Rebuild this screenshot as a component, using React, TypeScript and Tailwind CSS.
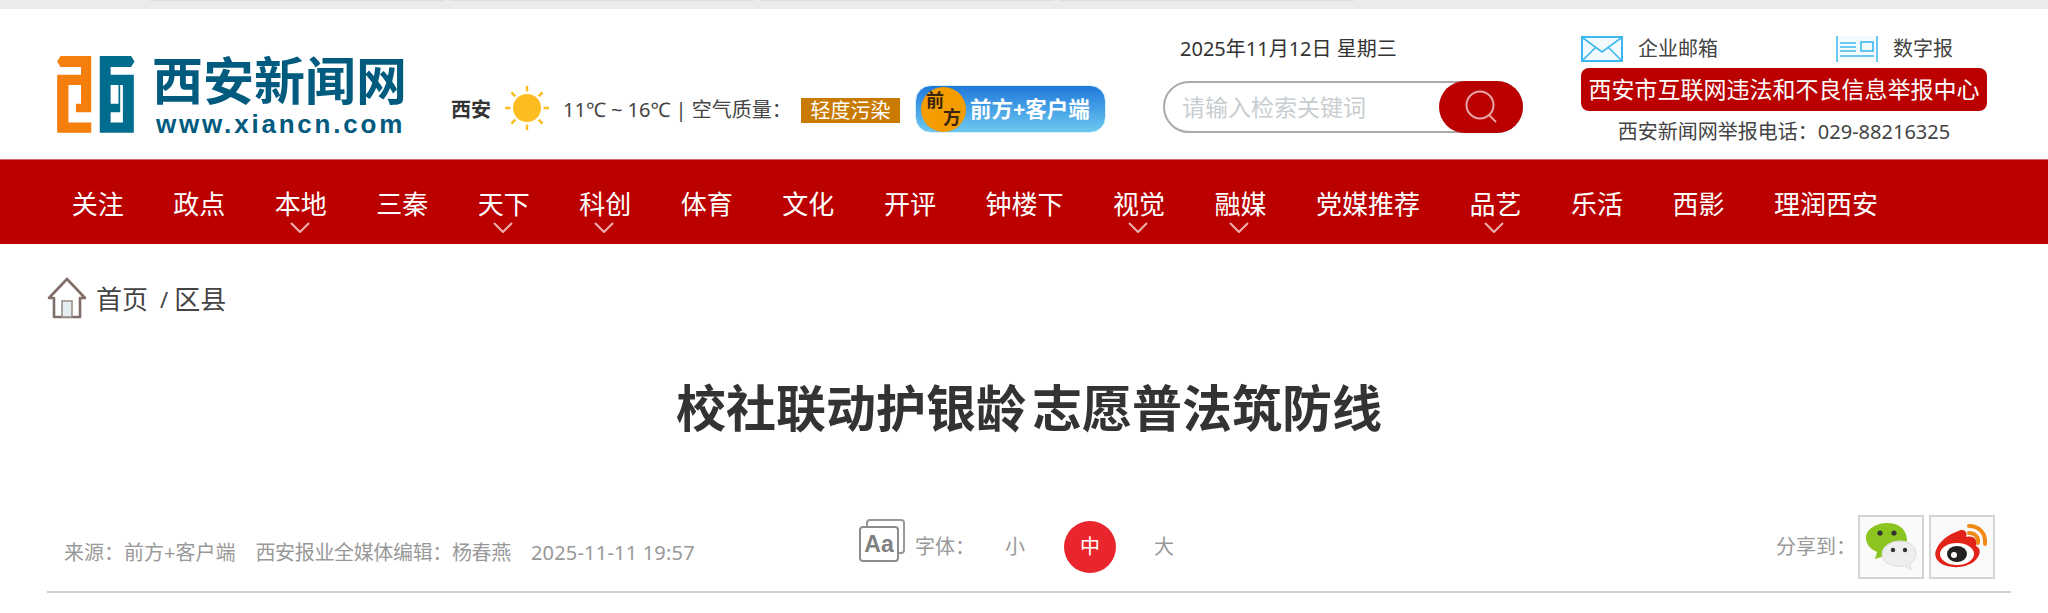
const navItems: [string, boolean][] = [
  ["关注", false], ["政点", false], ["本地", true], ["三秦", false], ["天下", true], ["科创", true],
  ["体育", false], ["文化", false], ["开评", false], ["钟楼下", false], ["视觉", true], ["融媒", true],
  ["党媒推荐", false], ["品艺", true], ["乐活", false], ["西影", false], ["理润西安", false],
];

function LogoMark() {
  return (
    <svg width="78" height="77" viewBox="55 50 228 226" className="shrink-0">
      <path fill="#f57e0d" d="M65,50 H155 V215 H110 V190 H125 V135 H88 V245 H155 V275 H55 V105 H125 V82 H65 L55,66 Z" />
      <path fill="#006d8f" fillRule="evenodd" d="M180,50 H272 L282,66 L272,82 H212 V105 H280 V275 H180 Z M212,135 V190 H235 V135 Z M212,215 V245 H248 V135 H240 V215 Z" />
    </svg>
  );
}

function Sun() {
  const rays = [0, 45, 90, 135, 180, 225, 270, 315];
  return (
    <svg width="44" height="44" viewBox="0 0 44 44" className="shrink-0 mt-[6px]">
      <circle cx="22" cy="22" r="14" fill="#fdbd20" />
      {rays.map((r) => (
        <rect key={r} x="20.75" y="0" width="2.5" height="5.5" fill="#fdbd20" transform={`rotate(${r} 22 22)`} />
      ))}
    </svg>
  );
}

function Mail() {
  return (
    <svg width="42" height="26" viewBox="0 0 42 26" className="shrink-0">
      <rect x="1" y="1" width="40" height="24" fill="#f2fbff" stroke="#3cb8ee" strokeWidth="2" />
      <path d="M2 2 L21 16 L40 2 M2 24 L15 11 M40 24 L27 11" fill="none" stroke="#3cb8ee" strokeWidth="1.6" />
    </svg>
  );
}

function Paper() {
  return (
    <svg width="42" height="26" viewBox="0 0 42 26" className="shrink-0">
      <rect x="1" y="0" width="40" height="26" fill="#f4fbff" />
      <path d="M1 0 V26 M41 0 V26" stroke="#3cb8ee" strokeWidth="1.5" />
      <path d="M4 7 H20 M4 11 H20 M4 15 H20 M4 20 H38" stroke="#3cb8ee" strokeWidth="1.6" />
      <rect x="25" y="6" width="12" height="9" fill="none" stroke="#3cb8ee" strokeWidth="1.6" />
    </svg>
  );
}

function Home() {
  return (
    <svg width="40" height="42" viewBox="0 0 40 42" className="shrink-0">
      <path d="M2 21 L20 2 L38 21 L33 21 V40 H7 V21 Z" fill="#fff" stroke="#806f68" strokeWidth="2.6" strokeLinejoin="round" />
      <rect x="15" y="24" width="10" height="16" fill="#e3eef3" stroke="#9b8f89" strokeWidth="1.6" />
    </svg>
  );
}

function FontIcon() {
  return (
    <svg width="46" height="43" viewBox="0 0 46 43" className="shrink-0 mb-[14px]">
      <rect x="8" y="1" width="37" height="33" rx="3" fill="#fff" stroke="#999" strokeWidth="2" />
      <rect x="1" y="8" width="38" height="34" rx="3" fill="#fff" stroke="#8c8c8c" strokeWidth="2" />
      <text x="20" y="33" textAnchor="middle" fontSize="23" fontWeight="700" fill="#808080" fontFamily="Liberation Sans, sans-serif">Aa</text>
    </svg>
  );
}

function Wechat() {
  return (
    <svg width="52" height="50" viewBox="0 0 52 50">
      <path d="M23 1 C36 1 42 10 42 18 C42 28 33 33 22 33 L10 37 L12 30 C5 27 1 22 1 16 C1 7 11 1 23 1 Z" fill="#8cc520" />
      <path d="M35 19 C45 19 51 25 51 32 C51 37 48 40 45 42 L46 48 L40 44 C29 46 17 42 17 32 C17 25 25 19 35 19 Z" fill="#eeeeee" stroke="#dddddd" />
      <circle cx="15" cy="11" r="2.6" fill="#333" />
      <circle cx="29" cy="11" r="2.6" fill="#333" />
      <circle cx="28" cy="28" r="2.2" fill="#333" />
      <circle cx="40" cy="28" r="2.2" fill="#333" />
    </svg>
  );
}

function Weibo() {
  return (
    <svg width="56" height="46" viewBox="0 0 56 46">
      <path d="M22 8 C30 3 34 8 32 13 C40 11 44 16 42 22 C46 24 47 28 44 33 C39 42 24 45 13 42 C2 39 -1 31 3 24 C6 17 14 11 22 8 Z" fill="#e2231a" />
      <ellipse cx="23" cy="30" rx="17" ry="11" fill="#fff" />
      <ellipse cx="23" cy="30" rx="10" ry="8" fill="#222" />
      <circle cx="20" cy="31" r="3" fill="#fff" />
      <path d="M35 2 C45 2 52 9 51 20" fill="none" stroke="#f08a17" strokeWidth="4" strokeLinecap="round" />
      <path d="M35 9 C41 9 45 13 44 19" fill="none" stroke="#f08a17" strokeWidth="4" strokeLinecap="round" />
    </svg>
  );
}

export default function App() {
  return (
    <div className="bg-white min-h-[613px] text-[#333] font-['Noto_Sans','Noto_Sans_CJK_SC',sans-serif]">
      <div className="h-[9px] bg-[#ebebeb] flex gap-[6px] pl-[150px]">
        <div className="w-[294px] h-px bg-[#dddddd]" />
        <div className="w-[304px] h-px bg-[#dddddd]" />
        <div className="w-[294px] h-px bg-[#dddddd]" />
        <div className="w-[294px] h-px bg-[#dddddd]" />
      </div>

      <header className="h-[150px] flex pl-[57px]">
        <div className="w-[394px] pt-[47px] flex gap-[17px]">
          <LogoMark />
          <div className="flex flex-col">
            <div className="pt-[2px] text-[51px] leading-[50px] font-bold text-[#005b7f] font-['Liberation_Sans','Noto_Sans_CJK_SC',sans-serif]">西安新闻网</div>
            <div className="text-[26px] leading-[26px] mt-[3px] font-bold text-[#005b7f] tracking-[2.8px] pl-[4px] font-['Liberation_Sans',sans-serif]">www.xiancn.com</div>
          </div>
        </div>

        <div className="w-[655px] pt-[71px] flex items-start h-full">
          <span className="text-[20px] leading-[60px] font-bold mr-[14px] w-[40px]">西安</span>
          <Sun />
          <span className="text-[20px] leading-[60px] ml-[14px] w-[238px] whitespace-nowrap text-[#444]">11℃ ~ 16℃ | 空气质量：</span>
          <span className="mt-[18px] w-[99px] h-[25px] bg-[#c97a00] text-white text-[20px] leading-[25px] text-center">轻度污染</span>
          <div className="relative mt-[5px] ml-[15px] w-[191px] h-[48px] rounded-[16px] bg-gradient-to-b from-[#1f78da] to-[#6cc8ef] flex items-center pl-[5px] gap-[4px] border border-[#d8eefa]">
            <div className="w-[45px] h-[45px] rounded-full bg-[#f59c00] shrink-0 flex flex-col justify-center px-[5px] text-[18px] leading-[17px] font-bold text-[#3a2410]">
              <span className="self-start">前</span>
              <span className="self-end">方</span>
            </div>
            <span className="text-white text-[21.5px] leading-[24px] font-bold whitespace-nowrap">前方+客户端</span>
          </div>
        </div>

        <div className="ml-[57px] w-[360px] flex flex-col">
          <div className="text-[20px] leading-[30px] pl-[17px] pt-[25px] text-[#333] whitespace-nowrap">2025年11月12日 星期三</div>
          <div className="mt-[17px] h-[52px] rounded-[26px] border-2 border-[#aaaaaa] flex items-center justify-between relative">
            <span className="text-[23px] leading-[30px] pl-[17px] text-[#c8cdd0]">请输入检索关键词</span>
            <div className="absolute right-[-2px] top-[-2px] w-[84px] h-[52px] rounded-[26px] bg-[#bb0000] flex items-center justify-center">
              <svg width="36" height="36" viewBox="0 0 36 36">
                <circle cx="17" cy="16" r="13.5" fill="none" stroke="#e9a5a5" strokeWidth="2" />
                <path d="M26 26 L33 33" stroke="#e9a5a5" strokeWidth="2" />
              </svg>
            </div>
          </div>
        </div>

        <div className="ml-[58px] w-[406px] flex flex-col pt-[27px]">
          <div className="flex h-[26px] items-center">
            <Mail />
            <span className="ml-[15px] w-[198px] text-[20px] leading-[26px] text-[#444]">企业邮箱</span>
            <Paper />
            <span className="ml-[15px] text-[20px] leading-[26px] text-[#444]">数字报</span>
          </div>
          <div className="mt-[6px] h-[43px] rounded-[8px] bg-[#bb0000] text-white text-[23px] leading-[43px] text-center whitespace-nowrap">西安市互联网违法和不良信息举报中心</div>
          <div className="mt-[6px] text-[20px] leading-[30px] text-center text-[#444] whitespace-nowrap">西安新闻网举报电话：029-88216325</div>
        </div>
      </header>

      <nav className="h-[85px] bg-[#bb0000] flex pl-[47px] pt-[26px] border-t border-[#d66a6a]">
        {navItems.map(([label, more]) => (
          <div key={label} className="px-[24.75px] flex flex-col items-center">
            <span className="text-white text-[26px] leading-[36px] whitespace-nowrap">{label}</span>
            {more && (
              <svg width="20" height="11" viewBox="0 0 20 11" className="mt-0 -ml-[2px]">
                <path d="M1 1 L10 10 L19 1" fill="none" stroke="#eeb0b0" strokeWidth="2" />
              </svg>
            )}
          </div>
        ))}
      </nav>

      <div className="mt-[33px] h-[42px] pl-[47px] flex items-center">
        <Home />
        <span className="ml-[9px] text-[26px] leading-[38px] pt-[2px] text-[#444]">首页</span>
        <span className="ml-[12px] text-[22px] leading-[38px] pt-[2px] text-[#444]">/</span>
        <span className="ml-[6px] text-[26px] leading-[38px] pt-[2px] text-[#444]">区县</span>
      </div>

      <h1 className="mt-[59px] pl-[10px] text-center text-[50px] leading-[60px] font-bold text-[#333] [word-spacing:-7px]">校社联动护银龄 志愿普法筑防线</h1>

      <div className="mt-[67px] mx-[47px] w-[1964px] h-[88px] border-b-2 border-[#d0d0d0] flex items-center pb-[2px]">
        <div className="w-[812px] pl-[17px] text-[20px] leading-[30px] text-[#999] whitespace-nowrap pt-[12px]">
          <span>来源：前方+客户端</span>
          <span className="ml-[20px] tracking-[-0.35px]">西安报业全媒体编辑：杨春燕</span>
          <span className="ml-[20px] tracking-[0.2px]">2025-11-11 19:57</span>
        </div>
        <FontIcon />
        <span className="ml-[10px] text-[20px] text-[#999]">字体：</span>
        <span className="ml-[30px] text-[20px] text-[#999]">小</span>
        <span className="ml-[39px] w-[52px] h-[52px] rounded-full bg-[#e9262e] text-white text-[20px] leading-[52px] text-center">中</span>
        <span className="ml-[38px] text-[20px] text-[#999]">大</span>
        <span className="ml-auto text-[20px] text-[#999]">分享到：</span>
        <div className="ml-[2px] w-[66px] h-[64px] border-2 border-[#d4d4d4] bg-[#fafafa] flex items-center justify-center"><Wechat /></div>
        <div className="ml-[5px] mr-[16px] w-[66px] h-[64px] border-2 border-[#d4d4d4] bg-[#fafafa] flex items-center justify-center"><Weibo /></div>
      </div>
    </div>
  );
}
